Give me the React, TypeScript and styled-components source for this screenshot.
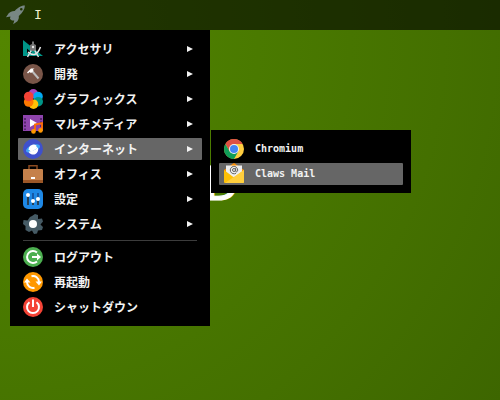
import React from "react";
import styled, { createGlobalStyle, css } from "styled-components";

const GlobalStyle = createGlobalStyle`
  * { box-sizing: border-box; }
  body {
    margin: 0;
    background: #437000;
  }
`;

const uiFont = css`
  font-family: "Noto Sans CJK JP", sans-serif;
  font-size: 12px;
  line-height: 20px;
  font-weight: 700;
`;

const Desktop = styled.div`
  position: relative;
  min-height: 100vh;
  overflow: hidden;
  background: radial-gradient(circle farthest-corner at 0 10%, #538600 0%, #4a7a00 42%, #447000 72%, #3d6600 100%);
`;

const WallpaperMark = styled.div`
  position: absolute;
  left: 205px;
  top: 156px;
  color: #ffffff;
  font-family: "Noto Sans", sans-serif;
  font-size: 47px;
  line-height: 52px;
  -webkit-text-stroke: 1px #ffffff;
`;

const Panel = styled.header`
  position: relative;
  display: flex;
  align-items: center;
  gap: 8px;
  height: 30px;
  padding: 0 6px;
  background: rgba(0, 0, 0, 0.6);
`;

const LauncherButton = styled.button`
  display: flex;
  padding: 0;
  border: 0;
  background: transparent;
`;

const PanelText = styled.span`
  color: #f1efcf;
  font-family: "DejaVu Sans Mono", monospace;
  font-size: 13px;
  line-height: 20px;
`;

const MenuList = styled.ul`
  display: flex;
  flex-direction: column;
  gap: 3px;
  width: 200px;
  margin: 0;
  padding: 8px;
  list-style: none;
  background: #000000;
`;

const RootMenu = styled(MenuList)`
  position: relative;
  margin-left: 10px;
`;

const SubMenu = styled(MenuList)`
  position: absolute;
  left: calc(100% + 9px);
  top: -8px;
`;

const MenuItem = styled.li`
  position: relative;
`;

const MenuButton = styled.button<{ $active?: boolean; $latin?: boolean }>`
  ${uiFont}
  display: flex;
  align-items: center;
  gap: 11px;
  width: 100%;
  height: 22px;
  padding: 0 9px 0 5px;
  border: 0;
  border-radius: 1px;
  color: #f2f2f2;
  text-align: left;
  background: ${(p) => (p.$active ? "#666666" : "transparent")};
  ${(p) =>
    p.$latin &&
    css`
      font-family: "DejaVu Sans Mono", monospace;
      font-size: 10px;
    `}
`;

const Label = styled.span`
  flex: 1;
  white-space: nowrap;
`;

const Separator = styled.li`
  height: 1px;
  margin: 2px 5px;
  background: #3c3c3c;
`;

const IconSvg = styled.svg`
  display: block;
  flex: none;
  width: 20px;
  height: 20px;
  overflow: visible;
`;

const ArrowSvg = styled.svg`
  flex: none;
  width: 6px;
  height: 8px;
`;

const Icon = ({ children }: { children: React.ReactNode }) => (
  <IconSvg viewBox="0 0 20 20" aria-hidden="true">
    {children}
  </IconSvg>
);

const Arrow = () => (
  <ArrowSvg viewBox="0 0 6 8" aria-hidden="true">
    <path d="M0 1 6 4 0 7Z" fill="#f2f2f2" />
  </ArrowSvg>
);

const RocketIcon = () => (
  <Icon>
    <path
      fillRule="evenodd"
      fill="#788783"
      d="M18.9.4C16 .3 12.5 1.600 8.700 5.900 6 5.800 4 6.800 2.700 8.200L0 12.200 4.400 11.600 4 14 6 15.600 8.300 15.400 7.200 19.200 11.400 16.200C12.800 14.400 13 12.800 12.800 11.100 16.700 7.500 18.800 4 18.900.4ZM15.300 2.900A1.300 1.300 0 1 1 15.300 5.500 1.300 1.300 0 1 1 15.300 2.900Z"
    />
  </Icon>
);

const AccessoriesIcon = () => (
  <Icon>
    <path fillRule="evenodd" fill="#009688" d="M0 1V17H20ZM4 9.500 9 14H4Z" />
    <path d="M5 13Q13 20 17.500 8" fill="none" stroke="#e8e8e8" strokeWidth="1.500" />
    <path d="M8.500 11 4.500 18M11.500 11l4 7" stroke="#e0e0e0" strokeWidth="1.500" fill="none" />
    <path d="M9 2.500h2V5l2 1v5l-2 1H9l-2-1V6l2-1Z" fill="#757575" />
    <circle cx="10" cy="8" r="1.200" fill="#e8e8e8" />
  </Icon>
);

const DevelopmentIcon = () => (
  <Icon>
    <circle cx="10" cy="10" r="10" fill="#795548" />
    <path d="m9 7 6.500 7.500" stroke="#bdbdbd" strokeWidth="2" />
    <path d="M4 8.500 8 4.500h3.500L10 5.500l.5 1.500L8 9 6.500 8 5 9.500Z" fill="#ffffff" />
  </Icon>
);

const GraphicsIcon = () => (
  <Icon>
    <circle cx="10.300" cy="4.800" r="4.800" fill="#ab47bc" />
    <circle cx="15" cy="7.500" r="4.800" fill="#03a9f4" />
    <circle cx="15.200" cy="12.700" r="4.800" fill="#009688" />
    <circle cx="10.500" cy="15.200" r="4.800" fill="#ffc107" />
    <circle cx="5.700" cy="13" r="4.800" fill="#ff7800" />
    <circle cx="5.700" cy="7.500" r="4.800" fill="#f44336" />
  </Icon>
);

const MultimediaIcon = () => (
  <Icon>
    <path fill="#8e44ad" d="M0 1h20v16H0Z" />
    <path d="M2 4v12M18 4v12" stroke="#57256f" strokeWidth="2" strokeDasharray="2 1.500" />
    <path fill="#ffffff" d="m7 5 7 4-7 4Z" />
    <path d="M12 17v-6.500l7-1.500v7" fill="none" stroke="#ff6d00" strokeWidth="1.800" />
    <circle cx="10.500" cy="17.400" r="2.300" fill="#ff9800" />
    <circle cx="17.500" cy="16.400" r="2.300" fill="#ff9800" />
  </Icon>
);

const InternetIcon = () => (
  <Icon>
    <circle cx="10" cy="10" r="10" fill="#3f51cc" />
    <ellipse cx="10" cy="9.500" rx="7.500" ry="3.400" transform="rotate(-22 10 9.500)" fill="#40a5f5" />
    <path d="M5.500 12.500C9 12.500 13 10.500 14.800 8.500A5 5 0 0 1 5.500 12.500Z" fill="#ffffff" />
    <path d="M6 8.500A5 5 0 0 1 13.500 6.500C13 9 9 11 5.500 11Z" fill="#ffffff" />
    <path d="M6 10.500 13 7l1.500 2L8 13Z" fill="#ffffff" />
  </Icon>
);

const OfficeIcon = () => (
  <Icon>
    <path d="M6 6V1.700h8V6" fill="none" stroke="#8a4a20" strokeWidth="1.500" />
    <rect y="5" width="20" height="14" rx="1" fill="#c5814b" />
    <path d="M0 16h20v2a1 1 0 0 1-1 1H1a1 1 0 0 1-1-1Z" fill="#9c5727" />
    <rect x="8" y="13" width="4" height="2" fill="#ffffff" />
  </Icon>
);

const SettingsIcon = () => (
  <Icon>
    <rect width="20" height="20" rx="5" fill="#1e88e5" />
    <path d="M5 4v12M10 4v12M15 4v12" stroke="#1558a5" strokeWidth="2" />
    <path d="M5 7v9M10 13v3M15 11v5" stroke="#263f55" strokeWidth="2" />
    <circle cx="5" cy="6" r="2" fill="#ffffff" />
    <circle cx="10" cy="12" r="2" fill="#ffffff" />
    <circle cx="15" cy="10" r="2" fill="#ffffff" />
  </Icon>
);

const SystemIcon = () => (
  <Icon>
    <path
      d="m9 2 3-2 3 1v4l4-.5 1 3-2.500 3 2.500 2.500-1 3-4 .5-1 3-3 .5-2-3.500-3 1.500-3.500-2V12L0 10l.5-4 4 .5L7 3Z"
      fill="#455a64"
    />
    <circle cx="10" cy="10" r="4" fill="#ffffff" />
  </Icon>
);

const LogoutIcon = () => (
  <Icon>
    <circle cx="10" cy="10" r="10" fill="#4caf50" />
    <path d="M14 5.500A6 6 0 1 0 14 14.500" fill="none" stroke="#ffffff" strokeWidth="2" />
    <path d="M9 9h5V6.500L18 10l-4 3.500V11H9Z" fill="#ffffff" />
  </Icon>
);

const RestartIcon = () => (
  <Icon>
    <circle cx="10" cy="10" r="10" fill="#ff9800" />
    <path d="M8.500 4.200A6 6 0 0 1 16 10M4 10a6 6 0 0 0 7.500 5.800" fill="none" stroke="#ffffff" strokeWidth="2" />
    <path d="M12.500 9.500h6.500L16 13.500ZM1 10.500h6.500L4 6.500Z" fill="#ffffff" />
  </Icon>
);

const ShutdownIcon = () => (
  <Icon>
    <circle cx="10" cy="10" r="10" fill="#f44336" />
    <path d="M6.500 5.200a6 6 0 1 0 7 0M10 2.500V10" fill="none" stroke="#ffffff" strokeWidth="2" />
  </Icon>
);

const ChromiumIcon = () => (
  <Icon>
    <circle cx="10" cy="10" r="10" fill="#ffcd40" />
    <path d="M1.340 5A10 10 0 0 1 18.660 5H10L5.700 12.500Z" fill="#dd5144" />
    <path d="M1.340 5A10 10 0 0 0 10 20L14.300 12.500H5.700Z" fill="#0f9d58" />
    <circle cx="10" cy="10" r="5" fill="#f1f1f1" />
    <circle cx="10" cy="10" r="4" fill="#4285f4" />
  </Icon>
);

const MailIcon = () => (
  <Icon>
    <path d="M0 6 10-1 20 6v5H0Z" fill="#ff8f00" />
    <path d="M2 1.500h16V13H2Z" fill="#eeeeee" />
    <circle cx="10" cy="6" r="1.500" fill="none" stroke="#616161" strokeWidth="1" />
    <path d="M11.700 4v3c0 1.500 2 1 2-1a3.700 3.700 0 1 0-1.700 3.200" fill="none" stroke="#616161" strokeWidth="1" />
    <path d="m0 6 10 7.500L20 6v12a1 1 0 0 1-1 1H1a1 1 0 0 1-1-1Z" fill="#ffc107" />
    <path d="M20 6 1 19h18a1 1 0 0 0 1-1Z" fill="#ffce3d" />
  </Icon>
);

const categories = [
  { label: "アクセサリ", icon: AccessoriesIcon },
  { label: "開発", icon: DevelopmentIcon },
  { label: "グラフィックス", icon: GraphicsIcon },
  { label: "マルチメディア", icon: MultimediaIcon },
  {
    label: "インターネット",
    icon: InternetIcon,
    apps: [
      { label: "Chromium", icon: ChromiumIcon },
      { label: "Claws Mail", icon: MailIcon, active: true },
    ],
  },
  { label: "オフィス", icon: OfficeIcon },
  { label: "設定", icon: SettingsIcon },
  { label: "システム", icon: SystemIcon },
];

const actions = [
  { label: "ログアウト", icon: LogoutIcon },
  { label: "再起動", icon: RestartIcon },
  { label: "シャットダウン", icon: ShutdownIcon },
];

export default function App() {
  return (
    <Desktop lang="ja">
      <GlobalStyle />
      <WallpaperMark>D</WallpaperMark>
      <Panel>
        <LauncherButton type="button" aria-label="メニュー">
          <RocketIcon />
        </LauncherButton>
        <PanelText>I</PanelText>
      </Panel>
      <RootMenu>
        {categories.map(({ label, icon: ItemIcon, apps }) => (
          <MenuItem key={label}>
            <MenuButton type="button" $active={!!apps} aria-haspopup="menu" aria-expanded={!!apps}>
              <ItemIcon />
              <Label>{label}</Label>
              <Arrow />
            </MenuButton>
            {apps && (
              <SubMenu>
                {apps.map(({ label: appLabel, icon: AppIcon, active }) => (
                  <MenuItem key={appLabel}>
                    <MenuButton type="button" $active={active} $latin>
                      <AppIcon />
                      <Label>{appLabel}</Label>
                    </MenuButton>
                  </MenuItem>
                ))}
              </SubMenu>
            )}
          </MenuItem>
        ))}
        <Separator role="separator" />
        {actions.map(({ label, icon: ItemIcon }) => (
          <MenuItem key={label}>
            <MenuButton type="button">
              <ItemIcon />
              <Label>{label}</Label>
            </MenuButton>
          </MenuItem>
        ))}
      </RootMenu>
    </Desktop>
  );
}
